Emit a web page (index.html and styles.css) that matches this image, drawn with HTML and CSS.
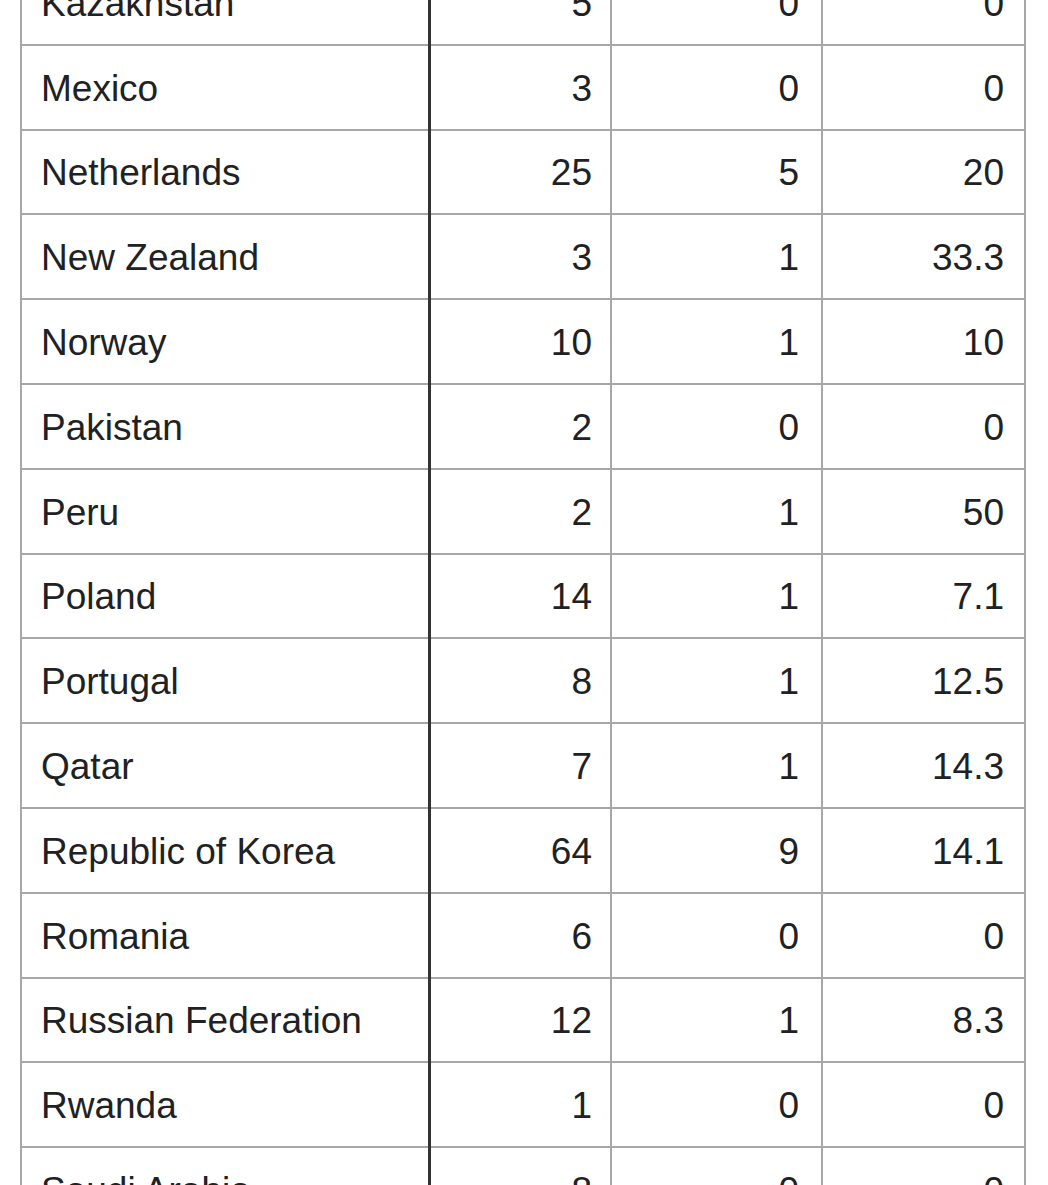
FILE: index.html
```html
<!DOCTYPE html>
<html>
<head>
<meta charset="utf-8">
<link rel="stylesheet" href="styles.css">
</head>
<body>
<table class="stats">
<tbody>
<tr><td class="name">Kazakhstan</td><td class="num">5</td><td class="num">0</td><td class="num">0</td></tr>
<tr><td class="name">Mexico</td><td class="num">3</td><td class="num">0</td><td class="num">0</td></tr>
<tr><td class="name">Netherlands</td><td class="num">25</td><td class="num">5</td><td class="num">20</td></tr>
<tr><td class="name">New Zealand</td><td class="num">3</td><td class="num">1</td><td class="num">33.3</td></tr>
<tr><td class="name">Norway</td><td class="num">10</td><td class="num">1</td><td class="num">10</td></tr>
<tr><td class="name">Pakistan</td><td class="num">2</td><td class="num">0</td><td class="num">0</td></tr>
<tr><td class="name">Peru</td><td class="num">2</td><td class="num">1</td><td class="num">50</td></tr>
<tr><td class="name">Poland</td><td class="num">14</td><td class="num">1</td><td class="num">7.1</td></tr>
<tr><td class="name">Portugal</td><td class="num">8</td><td class="num">1</td><td class="num">12.5</td></tr>
<tr><td class="name">Qatar</td><td class="num">7</td><td class="num">1</td><td class="num">14.3</td></tr>
<tr><td class="name">Republic of Korea</td><td class="num">64</td><td class="num">9</td><td class="num">14.1</td></tr>
<tr><td class="name">Romania</td><td class="num">6</td><td class="num">0</td><td class="num">0</td></tr>
<tr><td class="name">Russian Federation</td><td class="num">12</td><td class="num">1</td><td class="num">8.3</td></tr>
<tr><td class="name">Rwanda</td><td class="num">1</td><td class="num">0</td><td class="num">0</td></tr>
<tr><td class="name">Saudi Arabia</td><td class="num">8</td><td class="num">0</td><td class="num">0</td></tr>
<tr><td class="name">Senegal</td><td class="num">2</td><td class="num">0</td><td class="num">0</td></tr>
</tbody>
</table>
</body>
</html>
```
FILE: styles.css
```css
html, body {
  margin: 0;
  padding: 0;
  background: #ffffff;
  overflow: hidden;
}
body {
  font-family: "Liberation Sans", Arial, sans-serif;
  color: #202122;
}
.stats {
  border-collapse: collapse;
  margin: -41px 0 0 20px;
  table-layout: fixed;
}
.stats tr {
  height: 84.8px;
}
.stats td {
  border: 2px solid #a7a7a7;
  font-size: 37px;
  line-height: 42px;
  padding: 3px 20px 0;
  vertical-align: middle;
  white-space: nowrap;
}
.stats td.name {
  width: 368px;
  padding-left: 19px;
  padding-right: 19px;
  text-align: left;
  border-right: 3px solid #333333;
}
.stats td.num {
  text-align: right;
}
.stats td:nth-child(2) {
  width: 141px;
  padding-left: 20px;
  padding-right: 18px;
}
.stats td:nth-child(3) {
  width: 168px;
  padding-left: 19px;
  padding-right: 22px;
}
.stats td:nth-child(4) {
  width: 162px;
  padding-left: 19px;
  padding-right: 20px;
}
```
